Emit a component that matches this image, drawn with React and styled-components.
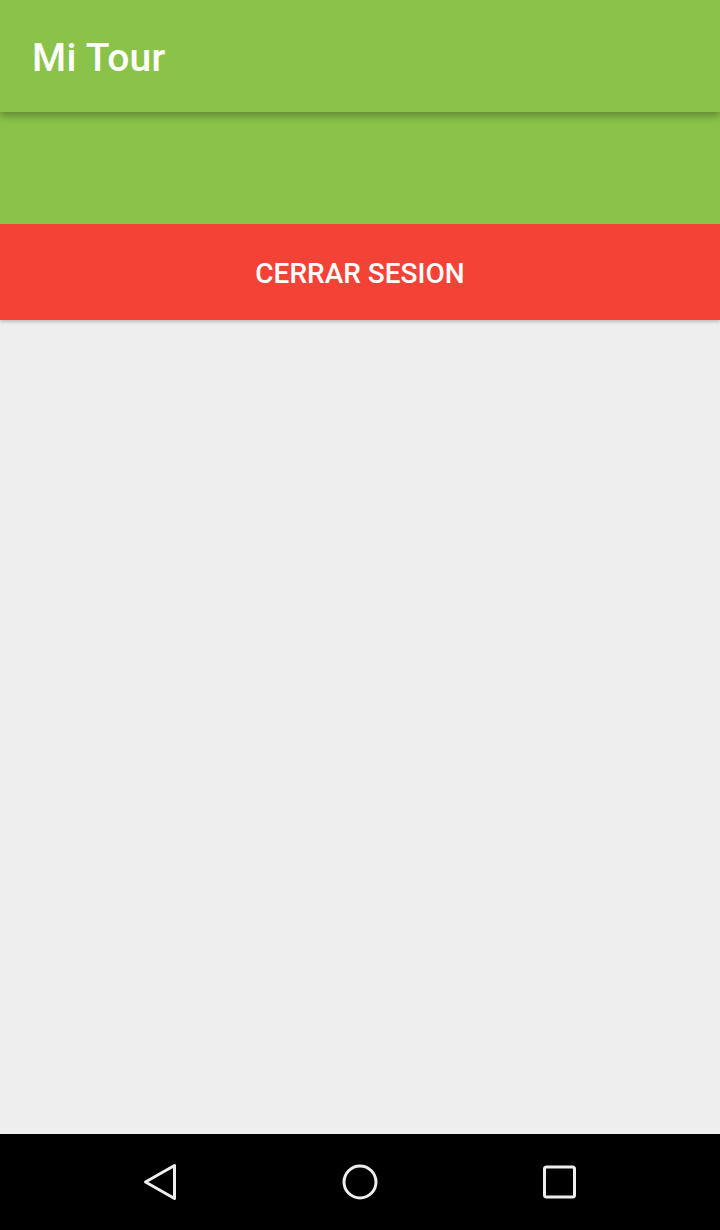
import React from 'react';
import styled, { createGlobalStyle } from 'styled-components';

const GlobalStyle = createGlobalStyle`
  html, body {
    margin: 0;
    padding: 0;
    background: #eeeeee;
  }
  * { box-sizing: border-box; }
`;

const Screen = styled.div`
  width: 720px;
  height: 1230px;
  display: flex;
  flex-direction: column;
  background: #eeeeee;
  font-family: Roboto, "Liberation Sans", sans-serif;
  overflow: hidden;
`;

const AppBar = styled.header`
  position: relative;
  z-index: 2;
  height: 112px;
  flex: none;
  display: flex;
  align-items: center;
  padding: 4px 0 0 32px;
  background: #8bc34a;
  box-shadow: 0 4px 8px rgba(0, 0, 0, 0.3);
`;

const Title = styled.h1`
  margin: 0;
  color: #ffffff;
  font-size: 39px;
  font-weight: 500;
  letter-spacing: 0.3px;
`;

const Header = styled.div`
  height: 112px;
  flex: none;
  background: #8bc34a;
`;

const LogoutButton = styled.button`
  height: 96px;
  flex: none;
  border: none;
  padding: 2px 0 0;
  background: #f44336;
  color: #ffffff;
  font-family: Roboto, "Liberation Sans", sans-serif;
  font-size: 28px;
  font-weight: 500;
  text-transform: uppercase;
  box-shadow: 0 2px 3px rgba(0, 0, 0, 0.2);
  position: relative;
  z-index: 1;
`;

const Content = styled.main`
  flex: 1;
  background: #eeeeee;
`;

const NavBar = styled.nav`
  height: 96px;
  flex: none;
  background: #000000;
  display: grid;
  grid-template-columns: repeat(3, 1fr);
  align-items: center;
  justify-items: center;
  padding: 0 60px;
`;

const NavIcon = styled.svg`
  width: 40px;
  height: 40px;
  stroke: #eeeeee;
  stroke-width: 3;
  fill: none;
  stroke-linejoin: round;
`;

export default function App() {
  return (
    <>
      <GlobalStyle />
      <Screen>
        <AppBar>
          <Title>Mi Tour</Title>
        </AppBar>
        <Header />
        <LogoutButton>Cerrar Sesion</LogoutButton>
        <Content />
        <NavBar>
          <NavIcon viewBox="0 0 40 40">
            <path d="M34.5 3.5 L34.5 36.5 L5.5 20 Z" />
          </NavIcon>
          <NavIcon viewBox="0 0 40 40">
            <circle cx="20" cy="20" r="16" />
          </NavIcon>
          <NavIcon viewBox="0 0 40 40">
            <rect x="4.5" y="5" width="30" height="30" rx="2" />
          </NavIcon>
        </NavBar>
      </Screen>
    </>
  );
}
